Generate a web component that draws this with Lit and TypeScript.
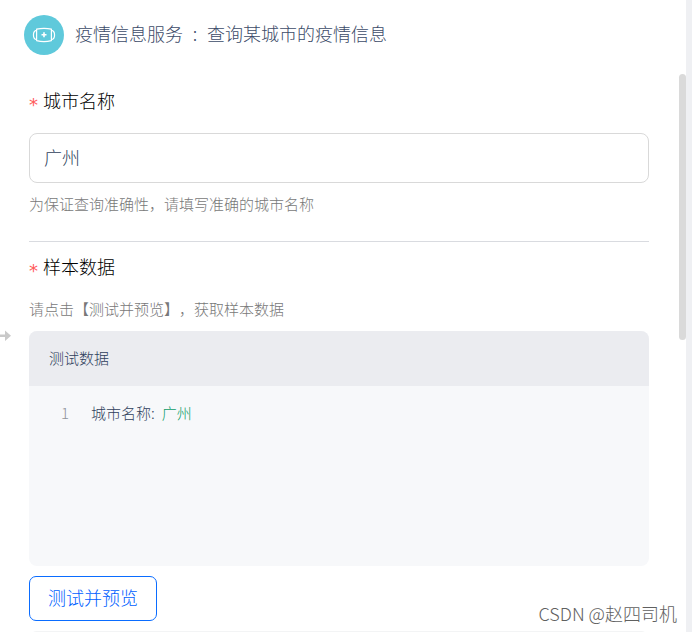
import { LitElement, html, css } from "lit";
import { customElement, property, state } from "lit/decorators.js";

interface SampleRow {
  key: string;
  value: string;
}

@customElement("field-label")
export class FieldLabel extends LitElement {
  static styles = css`
    :host {
      display: flex;
      align-items: center;
      gap: 4px;
      height: 26px;
      font-size: 18px;
      line-height: 26px;
      color: #000000;
    }
    .mark {
      width: 10px;
      padding-top: 10px;
      font-family: "DejaVu Sans", sans-serif;
      font-weight: 400;
      font-size: 18px;
      line-height: 26px;
      color: #ff5c5c;
    }
  `;

  render() {
    return html`<span class="mark" aria-hidden="true">*</span><slot></slot>`;
  }
}

@customElement("sample-data")
export class SampleData extends LitElement {
  @property({ type: String }) heading = "";
  @property({ attribute: false }) rows: SampleRow[] = [];

  static styles = css`
    :host {
      display: block;
      border-radius: 8px;
      overflow: hidden;
      background: #f7f8fa;
      font-size: 15px;
      line-height: 24px;
      color: #2f3f5c;
    }
    .heading {
      margin: 0;
      padding: 15px 20px 16px;
      background: #ebecf0;
      font-size: 15px;
      font-weight: inherit;
    }
    .body {
      min-height: 165px;
      padding: 15px 20px 0;
    }
    .row {
      display: grid;
      grid-template-columns: 20px 1fr;
      column-gap: 22px;
    }
    .number {
      text-align: right;
      color: #8f939b;
    }
    .value {
      margin-left: 7px;
      color: #0d9c68;
    }
  `;

  render() {
    return html`
      <h3 class="heading">${this.heading}</h3>
      <div class="body">
        ${this.rows.map(
          (row, i) => html`
            <div class="row">
              <span class="number">${i + 1}</span>
              <span>${row.key}:<span class="value">${row.value}</span></span>
            </div>
          `
        )}
      </div>
    `;
  }
}

@customElement("app-root")
export class AppRoot extends LitElement {
  @state() private city = "广州";

  static styles = css`
    :host {
      display: flex;
      position: relative;
      height: 100vh;
      overflow: hidden;
      background: #ffffff;
      font-family: "Noto Sans CJK SC", "Noto Sans", sans-serif;
      font-weight: 300;
      text-spacing-trim: space-all;
    }
    .pane {
      position: relative;
      flex: 1;
      min-width: 0;
      box-sizing: border-box;
      padding: 15px 37px 0 29px;
      overflow: hidden;
    }
    .edge {
      width: 6px;
      background: #eff0f3;
    }
    .thumb {
      position: absolute;
      top: 74px;
      right: 0;
      width: 7px;
      height: 266px;
      border-radius: 4px;
      background: #dadada;
    }
    .arrow {
      position: absolute;
      top: 330px;
      left: 0;
      display: block;
    }
    .header {
      display: flex;
      align-items: center;
      margin-left: -5px;
      margin-bottom: 32px;
    }
    .title {
      display: flex;
      margin: 0 0 4px 11px;
      font-size: 18px;
      line-height: 26px;
      font-weight: inherit;
      color: #3c4b68;
    }
    .colon {
      width: 24px;
      text-align: center;
    }
    .input {
      display: block;
      box-sizing: border-box;
      width: 100%;
      height: 50px;
      margin: 20px 0 9px;
      padding: 0 14px 2px;
      border: 1px solid #d9d9d9;
      border-radius: 8px;
      outline: none;
      background: #ffffff;
      font: inherit;
      font-size: 18px;
      color: #2f3f5c;
    }
    .hint {
      margin: 0;
      font-size: 15px;
      line-height: 24px;
      color: #787878;
    }
    .sample {
      margin-top: 25px;
      padding-top: 11px;
      border-top: 1px solid #d9dbe0;
    }
    .sample .hint {
      margin: 18px 0 10px;
    }
    .button {
      display: block;
      height: 45px;
      margin-top: 10px;
      padding: 0 18px 4px;
      border: 1px solid #0a6cff;
      border-radius: 7px;
      background: #ffffff;
      font: inherit;
      font-size: 18px;
      color: #0060ff;
      cursor: pointer;
    }
    .next {
      height: 40px;
      margin-top: 10px;
      border-radius: 8px;
      background: #f3f4f5;
    }
    .watermark {
      position: absolute;
      right: 15px;
      bottom: 6px;
      font-size: 18px;
      line-height: 26px;
      color: #606060;
      text-shadow: -1px -1px 0 #ffffff;
    }
  `;

  private onInput(e: Event) {
    this.city = (e.target as HTMLInputElement).value;
  }

  render() {
    return html`
      <main class="pane">
        <header class="header">
          <svg width="40" height="40" viewBox="0 0 40 40" aria-hidden="true">
            <circle cx="20" cy="20" r="20" fill="#5fc9db" />
            <g fill="none" stroke="#ffffff" stroke-width="1.2" stroke-linejoin="round">
              <path d="M12.6 14.2Q20 12.4 27.4 14.2V25.6Q20 27.8 12.6 25.6Z" />
              <path d="M12.6 15.3C8.4 15.8 8.4 24 12.6 24.5" />
              <path d="M27.4 15.3C31.6 15.8 31.6 24 27.4 24.5" />
              <path d="M20 17.3V22.3M17.5 19.8H22.5" stroke-width="1.6" />
            </g>
          </svg>
          <h1 class="title">
            <span>疫情信息服务</span><span class="colon">:</span><span>查询某城市的疫情信息</span>
          </h1>
        </header>

        <label for="city"><field-label>城市名称</field-label></label>
        <input
          class="input"
          id="city"
          type="text"
          required
          aria-describedby="city-hint"
          .value=${this.city}
          @input=${this.onInput}
        />
        <p class="hint" id="city-hint">为保证查询准确性，请填写准确的城市名称</p>

        <section class="sample">
          <field-label>样本数据</field-label>
          <p class="hint">请点击【测试并预览】，获取样本数据</p>
          <sample-data
            heading="测试数据"
            .rows=${[{ key: "城市名称", value: this.city }]}
          ></sample-data>
          <button class="button" type="button">测试并预览</button>
          <div class="next"></div>
        </section>

        <svg class="arrow" width="11" height="12" viewBox="0 0 11 12" aria-hidden="true">
          <path d="M0 4.5H5V0.5L11 5.8L5 11V7H0Z" fill="#c9c9c9" />
        </svg>
        <div class="thumb"></div>
      </main>
      <div class="edge"></div>
      <div class="watermark">CSDN @赵四司机</div>
    `;
  }
}
